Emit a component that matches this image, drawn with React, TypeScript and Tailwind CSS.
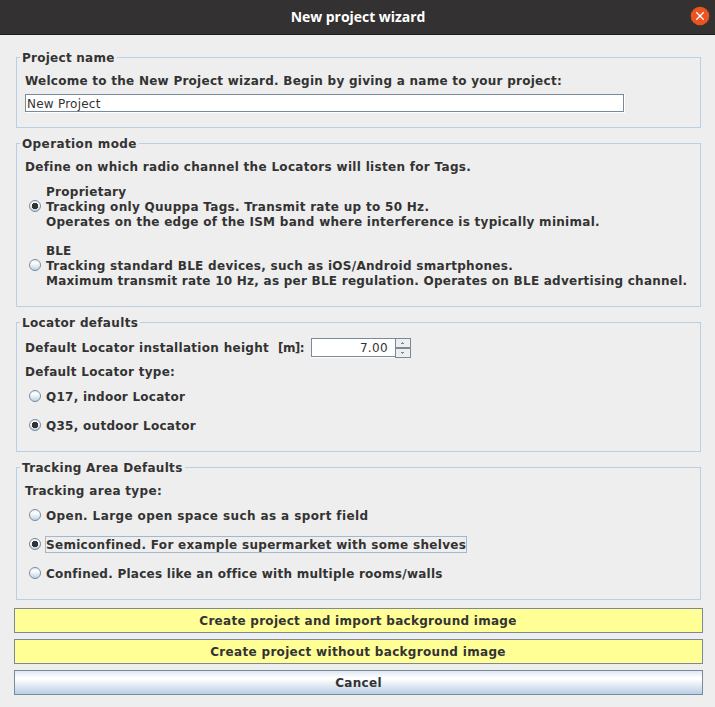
import type { ReactNode } from "react";

function Text({ children, className = "tracking-[0.28px]" }: { children: ReactNode; className?: string }) {
  return <div className={`w-fit shrink-0 whitespace-pre leading-[14px] ${className}`}>{children}</div>;
}

function Group({ title, titleClass, className, children }: { title: string; titleClass: string; className: string; children: ReactNode }) {
  return (
    <section className={`ml-4 mr-[14px] border border-[#b8cfe5] ${className}`}>
      <h2 className={`-mt-[7px] ml-[3px] h-[14px] w-fit whitespace-pre bg-[#eeeeee] pl-[2px] pr-[2px] leading-[14px] ${titleClass}`}>{title}</h2>
      <div className="pl-2">{children}</div>
    </section>
  );
}

function Radio({ checked = false }: { checked?: boolean }) {
  return (
    <svg className="-mt-[2px] block shrink-0" width="12" height="12" viewBox="0 0 12 12">
      <defs>
        <linearGradient id="radioFace" x1="0" y1="0" x2="0" y2="1">
          <stop offset="0" stopColor="#dde8f3" />
          <stop offset="0.3" stopColor="#ffffff" />
          <stop offset="1" stopColor="#b8cfe5" />
        </linearGradient>
      </defs>
      <circle cx="6" cy="6" r="5.5" fill="url(#radioFace)" stroke="#7a8a99" />
      {checked && (
        <path d="M4 3h4v1h1v4h-1v1h-4v-1h-1v-4h1z" fill="#333333" shapeRendering="crispEdges" />
      )}
    </svg>
  );
}

function Option({ checked, className, textClass, children }: { checked?: boolean; className: string; textClass: string; children: ReactNode }) {
  return (
    <div className={`flex items-center gap-[5px] pl-1 ${className}`}>
      <Radio checked={checked} />
      <Text className={textClass}>{children}</Text>
    </div>
  );
}

export default function App() {
  return (
    <div className="h-[707px] w-[715px] overflow-hidden bg-[#eeeeee] font-['DejaVu_Sans',sans-serif] text-[12px] font-bold text-[#333333]">
      <header className="flex h-[35px] items-center border-b border-[#1f1d1d] bg-[#333131] pl-[26px] pr-[5px]">
        <h1 className="flex-1 text-center font-['Open_Sans',sans-serif] text-[14px] leading-5 tracking-[-0.04px] text-white">New project wizard</h1>
        <button aria-label="Close" className="-mt-[2px] block">
          <svg className="block" width="20" height="20" viewBox="0 0 20 20">
            <circle cx="10" cy="10" r="9.3" fill="#e95420" />
            <path d="M6.3 6.3l7.4 7.4M13.7 6.3l-7.4 7.4" stroke="#fff" strokeWidth="1.3" />
          </svg>
        </button>
      </header>

      <Group title="Project name" titleClass="tracking-[0.26px]" className="mt-[22px] h-[71px]">
        <Text className="mt-[9px] tracking-[0.26px]">Welcome to the New Project wizard. Begin by giving a name to your project:</Text>
        <div className="mt-[6px] h-[19px] w-[600px] border-b border-r border-white">
          <div className="h-[18px] border border-[#7a8a99] bg-white pl-px pt-[2px] font-normal">
            <Text className="tracking-[0.23px]">New Project</Text>
          </div>
        </div>
      </Group>

      <Group title="Operation mode" titleClass="tracking-[0.4px]" className="mt-[15px] h-[164px]">
        <Text className="mt-[9px] tracking-[0.31px]">Define on which radio channel the Locators will listen for Tags.</Text>
        <div className="mt-[11px] flex items-center gap-[5px] pl-1">
          <Radio checked />
          <div className="flex flex-col gap-px">
            <Text>Proprietary</Text>
            <Text className="tracking-[0.3px]">Tracking only Quuppa Tags. Transmit rate up to 50 Hz.</Text>
            <Text>Operates on the edge of the ISM band where interference is typically minimal.</Text>
          </div>
        </div>
        <div className="mt-[15px] flex items-center gap-[5px] pl-1">
          <Radio />
          <div className="flex flex-col gap-px">
            <Text className="tracking-[0.1px]">BLE</Text>
            <Text className="tracking-[0.3px]">Tracking standard BLE devices, such as iOS/Android smartphones.</Text>
            <Text className="tracking-[0.25px]">Maximum transmit rate 10 Hz, as per BLE regulation. Operates on BLE advertising channel.</Text>
          </div>
        </div>
      </Group>

      <Group title="Locator defaults" titleClass="tracking-[0.34px]" className="mt-[15px] h-[130px]">
        <div className="mt-2 flex h-5">
          <div className="w-[286px] shrink-0 pt-[3px]">
            <Text className="tracking-[0.3px]">
              {"Default Locator installation height  "}
              <span className="tracking-[-0.6px]">[m]:</span>
            </Text>
          </div>
          <div className="h-5 w-[84px] border-b border-white">
            <div className="h-[19px] border border-r-0 border-[#7a8a99] bg-white pr-[7px] pt-[2px] font-normal">
              <Text className="ml-auto tracking-[0.35px]">7.00</Text>
            </div>
          </div>
          <div className="flex h-5 w-4 flex-col">
            <div className="flex h-[10px] items-center justify-center border border-[#7a8a99]">
              <svg className="block" width="4" height="2" viewBox="0 0 4 2"><path d="M1 0h1v1h1v1H0V1h1z" fill="#7a8a99" /></svg>
            </div>
            <div className="flex h-[10px] items-center justify-center border border-[#7a8a99]">
              <svg className="block" width="4" height="2" viewBox="0 0 4 2"><path d="M0 0h3v1H2v1H1V1H0z" fill="#7a8a99" /></svg>
            </div>
          </div>
        </div>
        <Text className="mt-[7px] tracking-[0.28px]">Default Locator type:</Text>
        <Option className="mt-[11px]" textClass="tracking-[0.25px]">Q17, indoor Locator</Option>
        <Option checked className="mt-[15px]" textClass="tracking-[0.28px]">Q35, outdoor Locator</Option>
      </Group>

      <Group title="Tracking Area Defaults" titleClass="tracking-[0.3px]" className="mt-[15px] h-[133px]">
        <Text className="mt-[9px] tracking-[0.32px]">Tracking area type:</Text>
        <Option className="mt-[11px]" textClass="tracking-[0.4px]">Open. Large open space such as a sport field</Option>
        <Option checked className="mt-[15px]" textClass="-mt-px pt-px tracking-[0.3px] outline outline-[#a3b8cc]">Semiconfined. For example supermarket with some shelves</Option>
        <Option className="mt-[15px]" textClass="tracking-[0.25px]">Confined. Places like an office with multiple rooms/walls</Option>
      </Group>

      <div className="ml-[14px] mr-3 mt-2 flex flex-col gap-[6px]">
        <button className="flex h-[25px] items-center justify-center border border-[#7a8a99] bg-[#ffff96] pr-px pt-px"><Text className="tracking-[0.28px]">Create project and import background image</Text></button>
        <button className="flex h-[25px] items-center justify-center border border-[#7a8a99] bg-[#ffff96] pr-px pt-px"><Text className="tracking-[0.32px]">Create project without background image</Text></button>
        <button className="flex h-[25px] items-center justify-center border border-[#7a8a99] bg-[linear-gradient(to_bottom,#dde8f3_0%,#ffffff_30%,#ffffff_35%,#b8cfe5_100%)] pt-px"><Text className="tracking-[0.3px]">Cancel</Text></button>
      </div>
    </div>
  );
}
